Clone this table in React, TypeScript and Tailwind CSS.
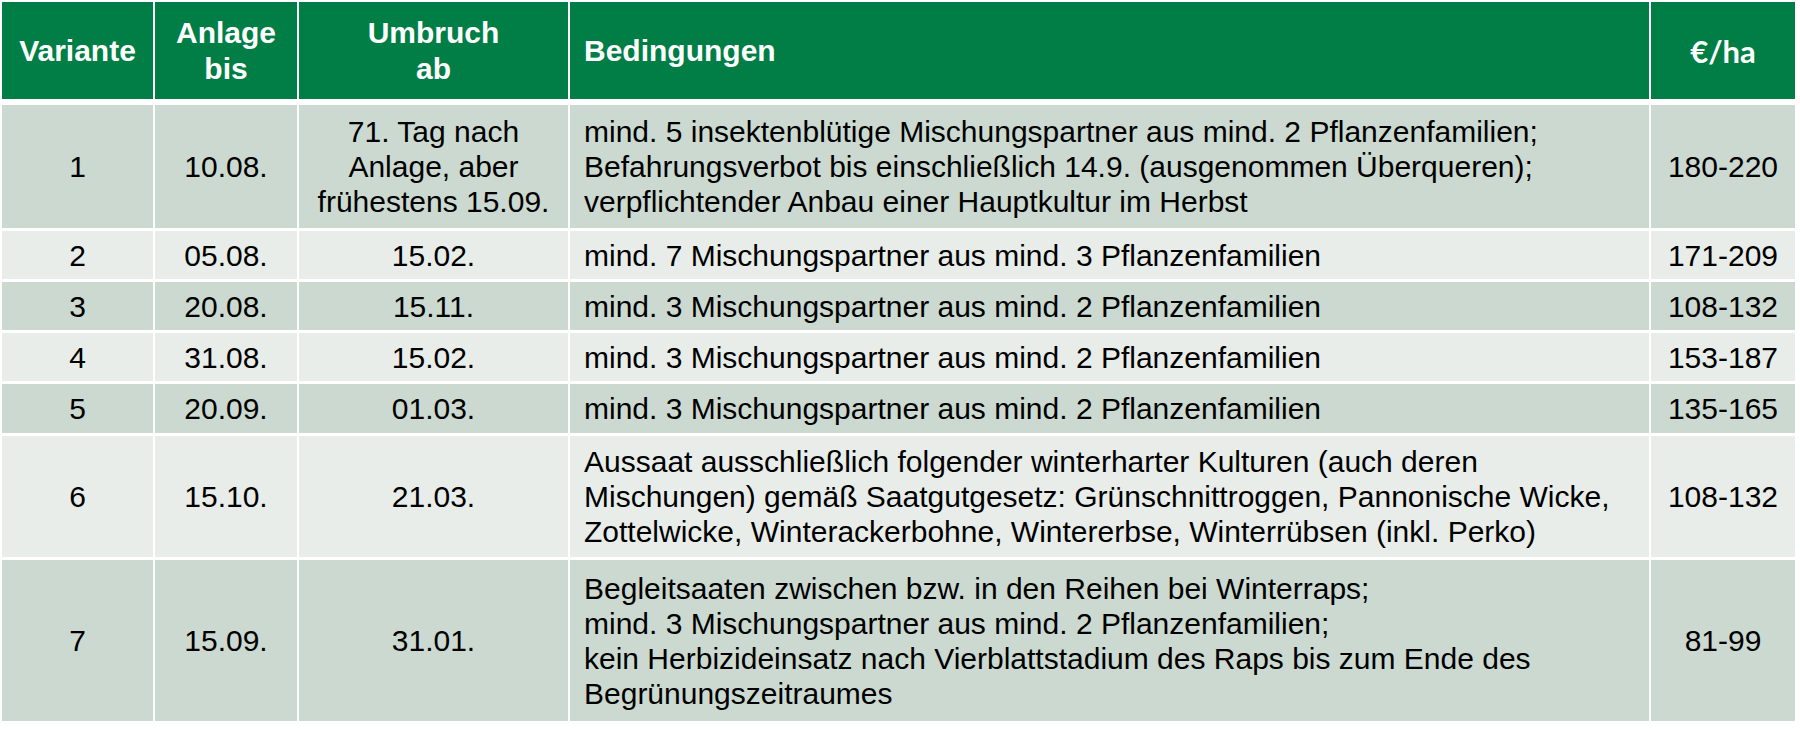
const cols = "grid grid-cols-[151px_142px_269px_1079px_144px] gap-x-[2px]";

type Row = {
    nr: string;
    anlage: string;
    umbruch: string[];
    bedingungen: string[];
    betrag: string;
    height: string;
    dark: boolean;
};

const rows: Row[] = [
    {
        nr: "1",
        anlage: "10.08.",
        umbruch: ["71. Tag nach", "Anlage, aber", "frühestens 15.09."],
        bedingungen: [
            "mind. 5 insektenblütige Mischungspartner aus mind. 2 Pflanzenfamilien;",
            "Befahrungsverbot bis einschließlich 14.9. (ausgenommen Überqueren);",
            "verpflichtender Anbau einer Hauptkultur im Herbst",
        ],
        betrag: "180-220",
        height: "h-[123px]",
        dark: true,
    },
    {
        nr: "2",
        anlage: "05.08.",
        umbruch: ["15.02."],
        bedingungen: ["mind. 7 Mischungspartner aus mind. 3 Pflanzenfamilien"],
        betrag: "171-209",
        height: "h-[48px]",
        dark: false,
    },
    {
        nr: "3",
        anlage: "20.08.",
        umbruch: ["15.11."],
        bedingungen: ["mind. 3 Mischungspartner aus mind. 2 Pflanzenfamilien"],
        betrag: "108-132",
        height: "h-[48px]",
        dark: true,
    },
    {
        nr: "4",
        anlage: "31.08.",
        umbruch: ["15.02."],
        bedingungen: ["mind. 3 Mischungspartner aus mind. 2 Pflanzenfamilien"],
        betrag: "153-187",
        height: "h-[48px]",
        dark: false,
    },
    {
        nr: "5",
        anlage: "20.09.",
        umbruch: ["01.03."],
        bedingungen: ["mind. 3 Mischungspartner aus mind. 2 Pflanzenfamilien"],
        betrag: "135-165",
        height: "h-[49px]",
        dark: true,
    },
    {
        nr: "6",
        anlage: "15.10.",
        umbruch: ["21.03."],
        bedingungen: [
            "Aussaat ausschließlich folgender winterharter Kulturen (auch deren",
            "Mischungen) gemäß Saatgutgesetz: Grünschnittroggen, Pannonische Wicke,",
            "Zottelwicke, Winterackerbohne, Wintererbse, Winterrübsen (inkl. Perko)",
        ],
        betrag: "108-132",
        height: "h-[121px]",
        dark: false,
    },
    {
        nr: "7",
        anlage: "15.09.",
        umbruch: ["31.01."],
        bedingungen: [
            "Begleitsaaten zwischen bzw. in den Reihen bei Winterraps;",
            "mind. 3 Mischungspartner aus mind. 2 Pflanzenfamilien;",
            "kein Herbizideinsatz nach Vierblattstadium des Raps bis zum Ende des",
            "Begrünungszeitraumes",
        ],
        betrag: "81-99",
        height: "h-[161px]",
        dark: true,
    },
];

function Lines({ lines }: { lines: string[] }) {
    return (
        <div>
            {lines.map((l, i) => (
                <div key={i} className="whitespace-nowrap">
                    {l}
                </div>
            ))}
        </div>
    );
}

export default function App() {
    return (
        <div className="w-[1800px] h-[732px] bg-white pt-[2px] pl-[2px] font-['Liberation_Sans',Arial,sans-serif] overflow-hidden">
            <div className="w-[1793px] flex flex-col">
                {/* Kopfzeile */}
                <div className={`${cols} h-[97px] text-white font-bold text-[30px] leading-[36px]`}>
                    <div className="bg-[#007e45] flex items-center justify-center text-center">Variante</div>
                    <div className="bg-[#007e45] flex items-center justify-center text-center">
                        Anlage
                        <br />
                        bis
                    </div>
                    <div className="bg-[#007e45] flex items-center justify-center text-center">
                        Umbruch
                        <br />
                        ab
                    </div>
                    <div className="bg-[#007e45] flex items-center pl-[14px]">Bedingungen</div>
                    <div className="bg-[#007e45] flex items-center justify-center font-['Lato',sans-serif] text-[31px]">€/ha</div>
                </div>

                <div className="mt-[6px] flex flex-col gap-y-[3px] text-black text-[30px] leading-[35px]">
                    {rows.map((r) => {
                        const bg = r.dark ? "bg-[#cbd9d0]" : "bg-[#e8ede9]";
                        return (
                            <div key={r.nr} className={`${cols} ${r.height}`}>
                                <div className={`${bg} flex items-center justify-center`}>{r.nr}</div>
                                <div className={`${bg} flex items-center justify-center`}>{r.anlage}</div>
                                <div className={`${bg} flex items-center justify-center text-center`}>
                                    <Lines lines={r.umbruch} />
                                </div>
                                <div className={`${bg} flex items-center pl-[14px]`}>
                                    <Lines lines={r.bedingungen} />
                                </div>
                                <div className={`${bg} flex items-center justify-center`}>{r.betrag}</div>
                            </div>
                        );
                    })}
                </div>
            </div>
        </div>
    );
}
